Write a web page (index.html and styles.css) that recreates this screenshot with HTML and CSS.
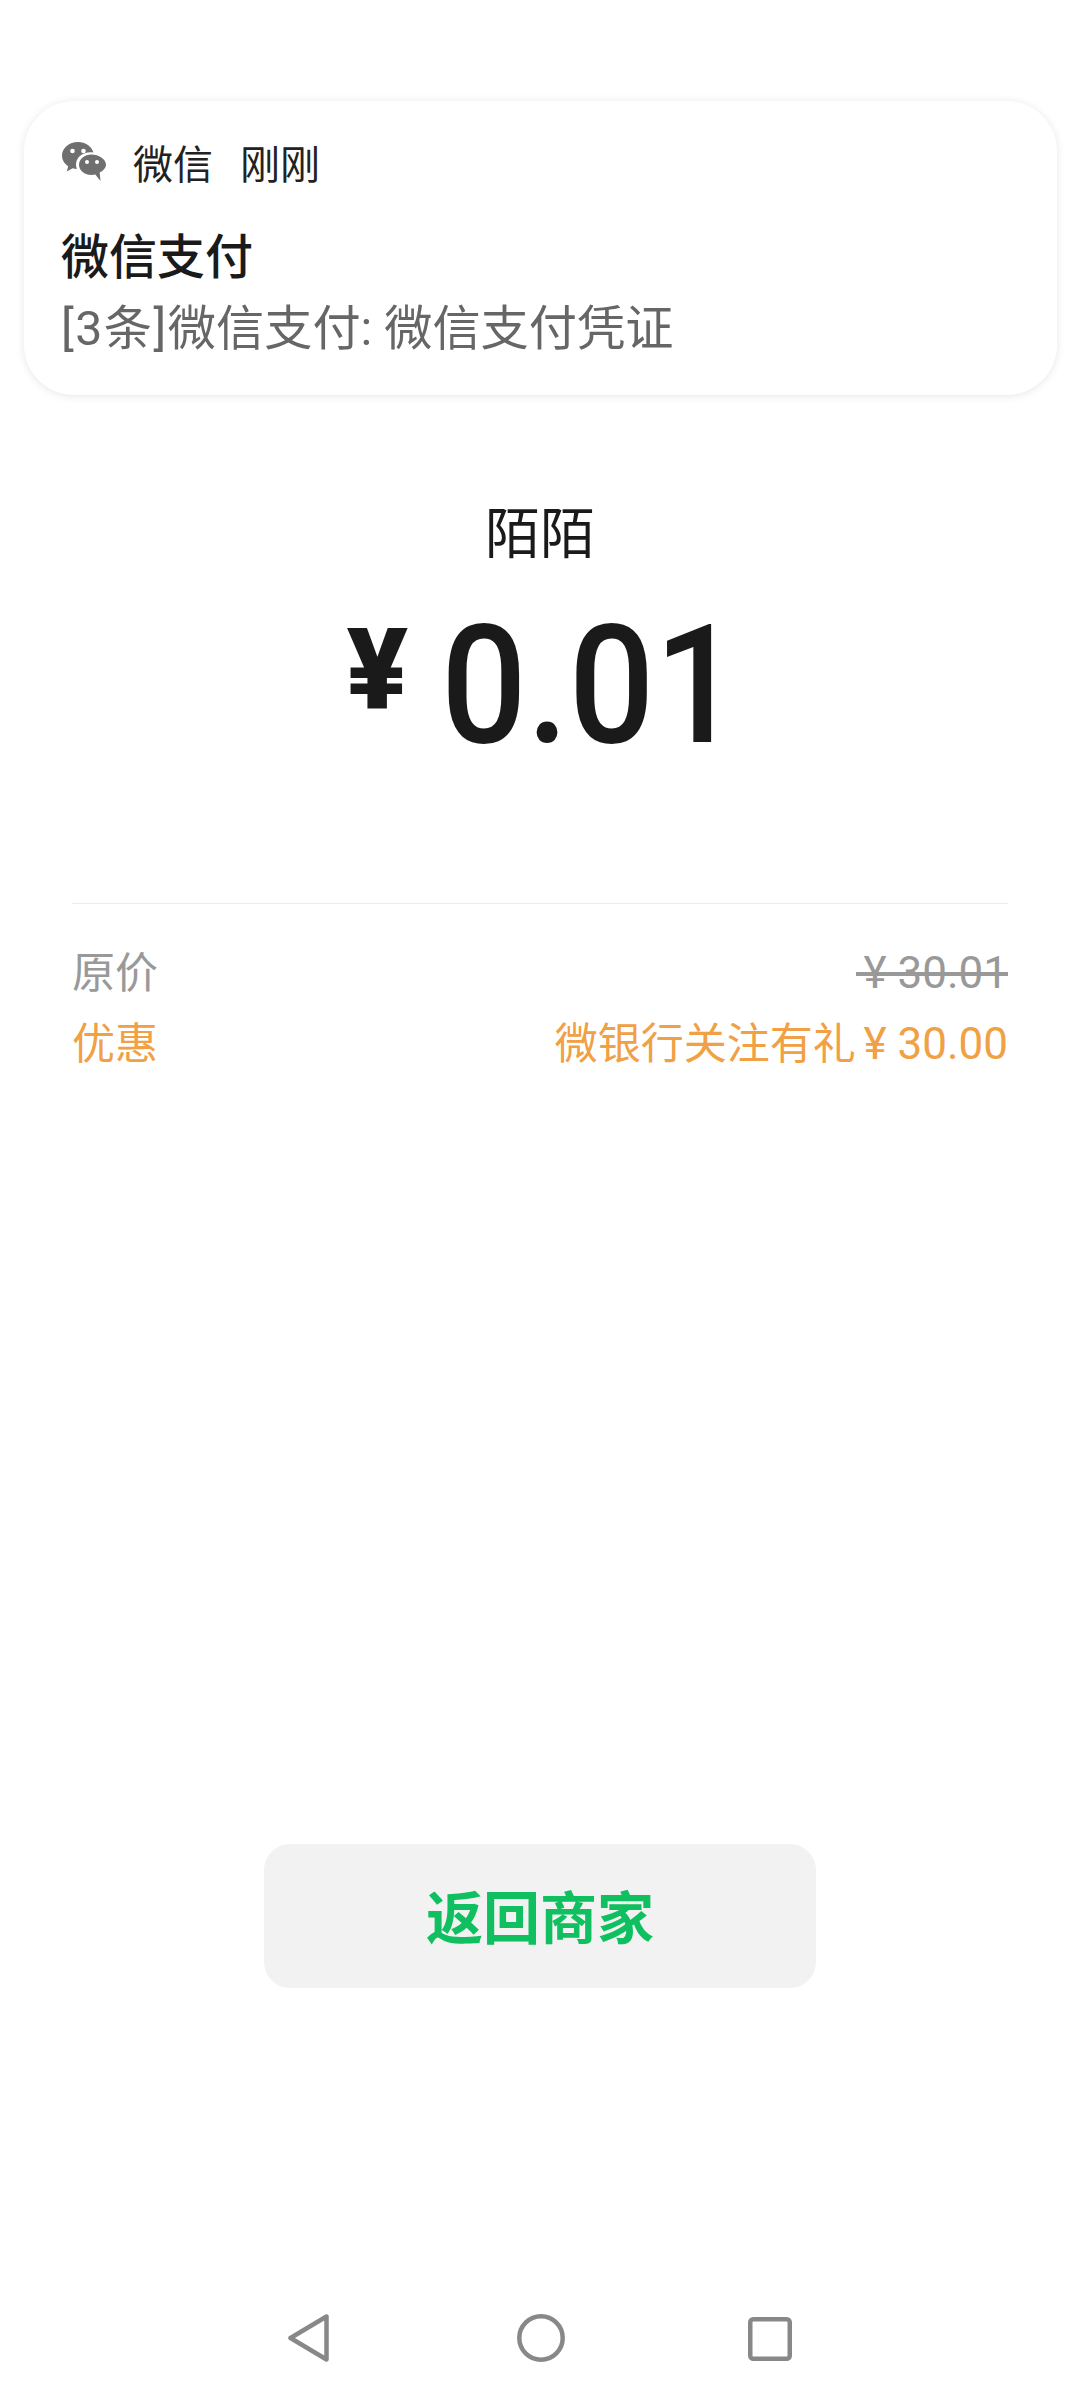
FILE: index.html
```html
<!DOCTYPE html>
<html>

<head>
    <title>微信支付</title>
    <meta charset="UTF-8" />
    <link rel="stylesheet" href="styles.css">
</head>

<body>
    <div id="screen">
        <!-- notification -->
        <div class="notice">
            <div class="notice-head">
                <svg class="wx-icon" width="44" height="40" viewBox="0 0 44 40">
                    <path fill="#6f6f6f" d="M16 0C7.2 0 0 6 0 13.500C0 17.900 2.400 21.700 6.200 24.200L4.800 29.500L10.600 26.200C12 26.600 13.400 26.800 14.900 26.900C14.300 25.500 14 24 14 22.500C14 15.500 20.400 10.200 28.500 10.200C29.500 10.200 30.500 10.300 31.400 10.500C29.800 4.500 23.500 0 16 0Z" />
                    <path fill="#6f6f6f" d="M29.500 12.500C22.600 12.500 17 17.100 17 22.800C17 28.500 22.600 33.100 29.500 33.100C30.800 33.100 32.100 32.900 33.300 32.600L38.500 39L37.700 30.500C41.500 28.600 44 25.900 44 22.800C44 17.100 36.400 12.500 29.500 12.500Z" />
                    <circle cx="10.500" cy="9" r="2.300" fill="#fff" />
                    <circle cx="21.500" cy="9" r="2.300" fill="#fff" />
                    <circle cx="25" cy="20" r="2" fill="#fff" />
                    <circle cx="35" cy="20" r="2" fill="#fff" />
                </svg>
                <span class="app-name">微信</span>
                <span class="app-time">刚刚</span>
            </div>
            <div class="notice-title">微信支付</div>
            <div class="notice-text"><span class="count">[3条]</span>微信支付: 微信支付凭证</div>
        </div>

        <div class="shop">陌陌</div>
        <div class="amount"><span class="yen">¥</span><span class="num">0.01</span></div>

        <div class="detail">
            <div class="row row-gray">
                <span>原价</span>
                <span class="latin old-price">&#8198;¥ 30.01</span>
            </div>
            <div class="row row-orange">
                <span>优惠</span>
                <span>微银行关注有礼 <span class="latin">¥ 30.00</span></span>
            </div>
        </div>

        <div class="back-wrap">
            <button class="back-btn">返回商家</button>
        </div>

        <!-- nav bar -->
        <div class="navbar">
            <svg width="42" height="48" viewBox="0 0 42 48">
                <path d="M38.500 2.500V45.500L2.500 24Z" fill="none" stroke="#888" stroke-width="4.500" stroke-linejoin="round" />
            </svg>
            <svg width="48" height="48" viewBox="0 0 48 48">
                <circle cx="24" cy="24" r="21.700" fill="none" stroke="#888" stroke-width="4.500" />
            </svg>
            <svg width="44" height="44" viewBox="0 0 44 44">
                <rect x="2.250" y="2.250" width="39.500" height="39.500" rx="3" fill="none" stroke="#888" stroke-width="4.500" />
            </svg>
        </div>
    </div>
</body>

</html>
```

FILE: styles.css
```css
* {
    box-sizing: border-box;
}

body {
    margin: 0;
    background: #fff;
    font-family: Roboto, "Noto Sans CJK SC", sans-serif;
}

#screen {
    width: 1080px;
    height: 2400px;
    display: flex;
    flex-direction: column;
    overflow: hidden;
}

.notice {
    height: 294px;
    margin: 101px 23px 0 24px;
    padding: 38px 38px 0 37px;
    background: #fff;
    border-radius: 50px;
    box-shadow: 0 1px 8px rgba(0, 0, 0, 0.1);
}

.notice-head {
    display: flex;
    align-items: center;
    height: 46px;
    color: #222;
    font-size: 40px;
}

.wx-icon {
    margin-left: 1px;
    margin-right: 27px;
}

.app-time {
    margin-left: 27px;
}

.notice-title {
    margin-top: 40px;
    height: 71px;
    line-height: 66px;
    font-size: 48px;
    font-weight: 500;
    color: #1a1a1a;
}

.notice-text {
    height: 66px;
    line-height: 66px;
    font-size: 48.200px;
    color: #666;
}

.count {
    letter-spacing: 1.500px;
}

.shop {
    margin-top: 101px;
    height: 76px;
    line-height: 76px;
    text-align: center;
    font-size: 55px;
    color: #1a1a1a;
}

.amount {
    margin-top: 29px;
    height: 170px;
    display: flex;
    justify-content: center;
    color: #1a1a1a;
}

.yen {
    font-size: 114px;
    font-weight: 900;
    line-height: 138px;
    margin-right: 33px;
}

/* digits in the shot are narrower than roboto */
.num {
    display: block;
    font-size: 165px;
    font-weight: 500;
    line-height: 170px;
    transform: scaleX(0.915);
    transform-origin: left center;
    margin-right: -35px;
}

.detail {
    margin: 132px 72px 0;
    padding-top: 34px;
    border-top: 1px solid #ececec;
}

.row {
    display: flex;
    justify-content: space-between;
    height: 71px;
    line-height: 71px;
    font-size: 43px;
}

.row-gray {
    color: #999;
}

.row-orange {
    color: #f0a045;
}

.row-orange .latin {
    margin-left: -3px;
}

.latin {
    font-size: 44px;
}

.old-price {
    text-decoration: line-through;
}

.back-wrap {
    margin-top: 764px;
    display: flex;
    justify-content: center;
}

.back-btn {
    width: 552px;
    height: 144px;
    padding: 0 0 4px;
    border: 0;
    border-radius: 26px;
    background: #f2f2f2;
    color: #10c060;
    font-family: "Noto Sans CJK SC", sans-serif;
    font-size: 57px;
    font-weight: 700;
}

.navbar {
    margin-top: auto;
    height: 86px;
    padding-left: 288px;
    display: flex;
    align-items: flex-start;
}

.navbar svg:nth-child(2) {
    margin-left: 187px;
}

.navbar svg:nth-child(3) {
    margin-left: 183px;
    margin-top: 3px;
}
```
